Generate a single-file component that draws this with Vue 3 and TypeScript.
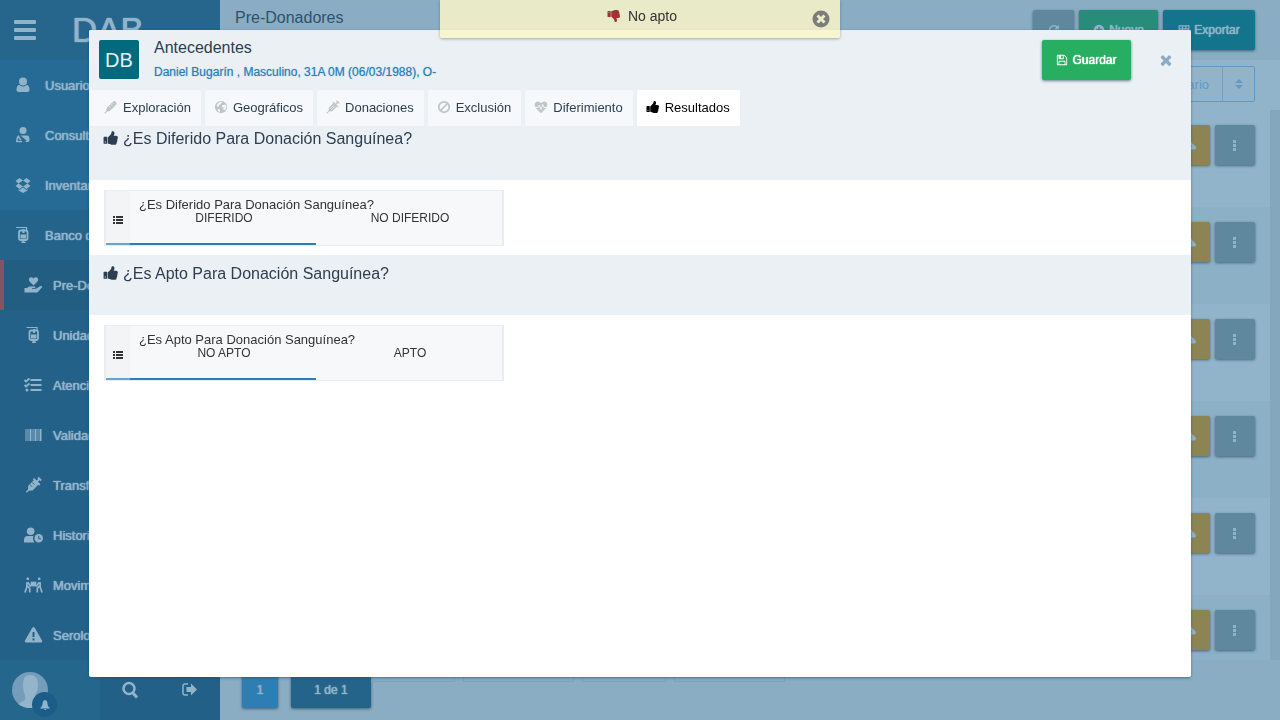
<script setup lang="ts">
import { ref, h, type FunctionalComponent } from 'vue'

const THUMB =
  'M320 1344q0-26-19-45t-45-19q-27 0-45.500 19t-18.500 45q0 27 18.500 45.500t45.500 18.500q26 0 45-18.500t19-45.500zm160-512v640q0 26-19 45t-45 19h-288q-26 0-45-19t-19-45v-640q0-26 19-45t45-19h288q26 0 45 19t19 45zm1184 0q0 86-55 149 15 44 15 76 3 76-43 137 17 56 0 117-15 57-54 94 9 112-49 181-64 76-197 78h-129q-66 0-144-15.500t-121.500-29-120.500-39.500q-123-43-158-44-26-1-45-19.500t-19-44.500v-641q0-25 18-43.500t43-20.500q24-2 76-59t101-121q68-87 101-120 18-18 31-48t17.500-48.500 13.500-60.500q7-39 12.500-61t19.500-52 34-50q19-19 45-19 46 0 82.500 10.500t60 26 40 40.500 24 45 12 50 5 45 .5 39q0 38-9.500 76t-19 60-27.500 56q-3 6-10 18t-11 22-8 24h277q78 0 135 57t57 135z'
const TIMES =
  'M1490 1322q0 40-28 68l-136 136q-28 28-68 28t-68-28l-294-294-294 294q-28 28-68 28t-68-28l-136-136q-28-28-28-68t28-68l294-294-294-294q-28-28-28-68t28-68l136-136q28-28 68-28t68 28l294 294 294-294q28-28 68-28t68 28l136 136q28 28 28 68t-28 68l-294 294 294 294q28 28 28 68z'

const icons: Record<string, { box: string; body: string }> = {
  bars: {
    box: '0 0 22 20',
    body: '<rect width="22" height="4" rx="1" fill="currentColor"/><rect y="8" width="22" height="4" rx="1" fill="currentColor"/><rect y="16" width="22" height="4" rx="1" fill="currentColor"/>',
  },
  thumbUp: { box: '0 0 1792 1792', body: `<path fill="currentColor" d="${THUMB}"/>` },
  thumbDown: { box: '0 0 1792 1792', body: `<path fill="currentColor" transform="matrix(1 0 0 -1 0 1792)" d="${THUMB}"/>` },
  times: { box: '0 0 1792 1792', body: `<path fill="currentColor" d="${TIMES}"/>` },
  closeCircle: {
    box: '0 0 18 18',
    body: '<circle cx="9" cy="9" r="8.500" fill="currentColor"/><path d="M5.500 5.500l7 7M12.500 5.500l-7 7" stroke="#ebecc8" stroke-width="3"/>',
  },
  save: {
    box: '0 0 1792 1792',
    body: '<path fill="currentColor" d="M512 1536h768v-384h-768v384zm896 0h128v-896q0-14-10-38.500t-20-34.500l-281-281q-10-10-34-20t-39-10v416q0 40-28 68t-68 28h-576q-40 0-68-28t-28-68v-416h-128v1280h128v-416q0-40 28-68t68-28h832q40 0 68 28t28 68v416zm-384-928v-320q0-13-9.500-22.500t-22.500-9.500h-192q-13 0-22.500 9.500t-9.500 22.500v320q0 13 9.500 22.500t22.500 9.500h192q13 0 22.500-9.500t9.500-22.500zm640 32v928q0 40-28 68t-68 28h-1344q-40 0-68-28t-28-68v-1344q0-40 28-68t68-28h928q40 0 88 20t76 48l280 280q28 28 48 76t20 88z"/>',
  },
  user: {
    box: '0 0 18 18',
    body: '<circle cx="9" cy="5.500" r="4" fill="currentColor"/><path fill="currentColor" d="M5.500 9Q9 12 12.500 9 15.500 9 15.500 14 15.500 16 13.500 16h-9Q2.500 16 2.500 14 2.500 9 5.500 9z"/>',
  },
  doctor: {
    box: '0 0 18 18',
    body: '<circle cx="9" cy="4.500" r="3.500" fill="currentColor"/><path d="M4 10.500Q2.800 12 2.800 15.500H8M4.500 9.500q0 3 2.500 4" fill="none" stroke="currentColor" stroke-width="1.500"/><path fill="currentColor" d="M6.500 9.500h7q2 0 2 4.500 0 2-1.500 2h-3l1.500-1.500z"/>',
  },
  dropbox: {
    box: '0 0 18 18',
    body: '<path fill="currentColor" d="M5.500 2L9 4.500 4.500 7.500 1.500 5zM12.500 2L9 4.500l4.500 3 3-2.500zM1.500 10l3-2.500L9 10.500 5.500 13zM16.500 10l-3-2.500-4.500 3 3.500 2.500zM9 11.500l3.500 2.500 1-1v1.500L9 17l-4.500-2.500V13l1 1z"/>',
  },
  bag: {
    box: '0 0 18 18',
    body: '<path d="M2 1.500h10.500v3" fill="none" stroke="currentColor" stroke-width="1.200"/><rect x="5" y="4.500" width="8.500" height="9.500" rx="1.500" fill="none" stroke="currentColor" stroke-width="1.800"/><path fill="currentColor" d="M6.500 8.500h5.500v4H6.500zM8.500 3h2v4h-2zM8.500 14h1.500v3H8.500zM7.500 15.500h4V17h-4z"/>',
  },
  handHeart: {
    box: '0 0 18 18',
    body: '<path fill="currentColor" d="M9 9.500L5 5.500Q3.500 3 5.500 1.500 7.500.5 9 2.500 10.500.5 12.500 1.500 14.500 3 13 5.500zM0 12h2.500l2-1.500h6q1 .5 0 1.500H7.500v.8h4L16 10q2 0 1.800 1L13 16.500H0z"/>',
  },
  tasks: {
    box: '0 0 18 18',
    body: '<path fill="currentColor" d="M6 3h11v2H6zM6 8h11v2H6zM6 13h11v2H6z"/><circle cx="2.500" cy="14" r="1.500" fill="currentColor"/><path d="M0 4l1.500 1.500L5 2.500M0 9l1.500 1.500L5 7.500" fill="none" stroke="currentColor" stroke-width="1.800"/>',
  },
  barcode: {
    box: '0 0 18 18',
    body: '<path fill="currentColor" d="M1 3h1v12H1zM3 3h1v12H3zM5 3h2v12H5zM8 3h1v12H8zM10 3h2v12h-2zM13 3h1v12h-1zM15 3h2v12h-2z"/>',
  },
  syringe: {
    box: '0 0 20 20',
    body: '<path d="M2 18l3-3" stroke="currentColor" stroke-width="1.500"/><path d="M4 16.500v-5.500l7-7 5 5-7 7z" fill="currentColor"/><path d="M10 3l7 7M13.500 6.500L17 3M15 1.500l3.500 3.500" stroke="currentColor" stroke-width="2"/><path d="M6 9.500l2.500 2.500M8.500 7l2.500 2.500" stroke="#236188" stroke-width="1"/>',
  },
  vial: {
    box: '0 0 20 20',
    body: '<path d="M1 19l4-4" stroke="currentColor" stroke-width="1.500"/><path d="M3.500 16.500q-1-4 1.500-6.500l8-8q2-1.500 4 .5t.5 4l-8 8q-2.500 2.500-6 2z" fill="currentColor"/><path d="M7 8.500l2 2M9.500 6l2 2M12 3.500l2 2" stroke="#f6f8fb" stroke-width="1"/>',
  },
  needle: {
    box: '0 0 20 20',
    body: '<path d="M1 19l4-4" stroke="currentColor" stroke-width="1.500"/><path d="M4 16v-5l7-7 5 5-7 7z" fill="currentColor"/><path d="M10 3l7 7M13.500 6.500L17 3M15 1l4 4" stroke="currentColor" stroke-width="1.800"/><path d="M6 12.500L11 7.500M8 14l5-5" stroke="#f6f8fb" stroke-width="1"/>',
  },
  userClock: {
    box: '0 0 20 18',
    body: '<circle cx="7" cy="5" r="4" fill="currentColor"/><path fill="currentColor" d="M0 17v-3q0-4 4-4h6q-1.500 3 1 7z"/><circle cx="15.500" cy="12.500" r="4.500" fill="currentColor"/><path d="M15.500 10v3H18" fill="none" stroke="#236188" stroke-width="1"/>',
  },
  carry: {
    box: '0 0 20 18',
    body: '<circle cx="4" cy="2.500" r="1.500" fill="currentColor"/><circle cx="16" cy="2.500" r="1.500" fill="currentColor"/><path fill="currentColor" d="M7 5.500h6v5H7z"/><path d="M3 6v5l-2 6M3.500 10l2.500 2.500V17M4 6l3 4.500M17 6v5l2 6M16.500 10L14 12.500V17M16 6l-3 4.500" fill="none" stroke="currentColor" stroke-width="1.800"/>',
  },
  warning: {
    box: '0 0 18 18',
    body: '<path fill="currentColor" d="M9 1q.8 0 1.500 1.200l7 12.300q.8 2-.8 2H1.300q-1.600 0-.8-2l7-12.300Q8.200 1 9 1z"/><path fill="#236188" d="M8 6h2v5H8zM8 12.500h2v2H8z"/>',
  },
  bell: {
    box: '0 0 12 12',
    body: '<path fill="currentColor" d="M6 1q2.500.5 2.500 4Q8.500 7.500 11 9.500H1Q3.500 7.500 3.500 5 3.500 1.500 6 1zM5 10h2.500q-1.200 2-2.500 0z"/>',
  },
  search: {
    box: '0 0 18 18',
    body: '<circle cx="8" cy="7.500" r="5.500" fill="none" stroke="currentColor" stroke-width="2.500"/><path d="M11.500 11.500l4.500 5" stroke="currentColor" stroke-width="3"/>',
  },
  logout: {
    box: '0 0 18 18',
    body: '<path d="M7 3H4Q2 3 2 5v7q0 2 2 2h3" fill="none" stroke="currentColor" stroke-width="1.500"/><path fill="currentColor" d="M5.500 6H10V2.500l6 6-6 6V11H5.500z"/>',
  },
  globe: {
    box: '0 0 16 16',
    body: '<circle cx="8" cy="8" r="7" fill="currentColor"/><path fill="#f6f8fb" d="M7 2l2 .5-1 2-2 1L5 8 3 6.500Q3.500 3.500 7 2zM9.500 6L13 5l1.500 3-2 4-2-1.500.5-2-2-.5zM4 10l3 1-.5 3Q4 12.500 4 10z"/>',
  },
  ban: {
    box: '0 0 16 16',
    body: '<circle cx="8" cy="8" r="6" fill="none" stroke="currentColor" stroke-width="2"/><path d="M4 12l8-8" stroke="currentColor" stroke-width="2"/>',
  },
  heartbeat: {
    box: '0 0 16 16',
    body: '<path fill="currentColor" d="M8 15L2 9Q-.5 5 2 2.500 5 .5 8 3.500q3-3 6-1Q16.500 5 14 9z"/><path d="M1 8.500h3.500L6 6l2 5 2-6 1.500 3.500H15" fill="none" stroke="#f6f8fb" stroke-width="1"/>',
  },
  list: {
    box: '0 0 12 10',
    body: '<path fill="currentColor" d="M1 1h2v2H1zM1 4h2v2H1zM1 7h2v2H1zM4 1h7v2H4zM4 4h7v2H4zM4 7h7v2H4z"/>',
  },
  refresh: {
    box: '0 0 16 16',
    body: '<path d="M13 5A6 6 0 1 0 14 9" fill="none" stroke="currentColor" stroke-width="2"/><path fill="currentColor" d="M14.500 1v6h-6z"/>',
  },
  plus: {
    box: '0 0 16 16',
    body: '<circle cx="8" cy="8" r="7" fill="currentColor"/><path d="M8 4v8M4 8h8" stroke="#288c7a" stroke-width="2"/>',
  },
  table: {
    box: '0 0 16 16',
    body: '<path d="M1.500 2.500h13v11h-13zM1.500 6.500h13M1.500 10h13M6 3v10.500M10.500 3v10.500" fill="none" stroke="currentColor" stroke-width="1.500"/>',
  },
  sort: { box: '0 0 10 12', body: '<path fill="currentColor" d="M5 1l4 4H1zM5 11L1 7h8z"/>' },
  cloud: {
    box: '0 0 16 16',
    body: '<path fill="currentColor" d="M4 14Q0 13.500 1 10.500q.5-1.500 2-2Q3.500 3 7.500 3q3 0 4 3.500Q14 6.500 14 9q2 .5 2 2.500 0 2.500-3 2.500z"/><path fill="#8c8453" d="M7 7h2v2h2l-3 3-3-3h2z"/>',
  },
  dots: { box: '0 0 12 12', body: '<path fill="currentColor" d="M4 1h3v3H4zM4 5h3v3H4zM4 9h3v3H4z"/>' },
}

const Icon: FunctionalComponent<{ name: string }> = (props) =>
  h('svg', { viewBox: icons[props.name].box, 'aria-hidden': 'true', fill: 'none', innerHTML: icons[props.name].body })
Icon.props = ['name']

const mainMenu = [
  { icon: 'user', label: 'Usuarios' },
  { icon: 'doctor', label: 'Consultas' },
  { icon: 'dropbox', label: 'Inventario' },
  { icon: 'bag', label: 'Banco de Sangre' },
]
const subMenu = [
  { icon: 'handHeart', label: 'Pre-Donadores' },
  { icon: 'bag', label: 'Unidades' },
  { icon: 'tasks', label: 'Atenciones' },
  { icon: 'barcode', label: 'Validaciones' },
  { icon: 'syringe', label: 'Transfusiones' },
  { icon: 'userClock', label: 'Historial' },
  { icon: 'carry', label: 'Movimientos' },
  { icon: 'warning', label: 'Serología' },
]
const tabs = [
  { icon: 'vial', label: 'Exploración' },
  { icon: 'globe', label: 'Geográficos' },
  { icon: 'needle', label: 'Donaciones' },
  { icon: 'ban', label: 'Exclusión' },
  { icon: 'heartbeat', label: 'Diferimiento' },
  { icon: 'thumbUp', label: 'Resultados' },
]
const activeTab = ref(5)
const sections = ref([
  { title: '¿Es Diferido Para Donación Sanguínea?', options: ['DIFERIDO', 'NO DIFERIDO'], chosen: 0 },
  { title: '¿Es Apto Para Donación Sanguínea?', options: ['NO APTO', 'APTO'], chosen: 0 },
])
</script>

<template>
  <div class="app">
    <aside class="sidebar">
      <div class="brand">
        <button class="burger" aria-label="Menú"><Icon name="bars" /></button>
        <span class="logo">DAB</span>
      </div>
      <nav class="menu">
        <a v-for="(m, i) in mainMenu" :key="m.label" href="#" class="item" :class="{ open: i === 3 }">
          <Icon :name="m.icon" /><span>{{ m.label }}</span>
        </a>
        <div class="sub">
          <a v-for="(m, i) in subMenu" :key="m.label" href="#" class="item" :class="{ current: i === 0 }">
            <Icon :name="m.icon" /><span>{{ m.label }}</span>
          </a>
        </div>
      </nav>
      <div class="account">
        <div class="avatar">
          <svg class="face" viewBox="0 0 36 36" aria-hidden="true">
            <circle cx="18" cy="18" r="18" fill="#749dbb" />
            <path fill="#93b4ca" d="M18 3q8 0 8 9 0 8-3 11v5l7 4Q18 40 6 32l7-4v-5q-2-3-2-11 0-9 7-9z" />
          </svg>
          <span class="bell"><Icon name="bell" /></span>
        </div>
        <div class="tools">
          <button aria-label="Buscar"><Icon name="search" /></button>
          <button aria-label="Salir"><Icon name="logout" /></button>
        </div>
      </div>
    </aside>

    <main class="page">
      <header class="top">
        <h1>Pre-Donadores</h1>
        <button class="btn grey refresh" aria-label="Recargar"><Icon name="refresh" /></button>
        <button class="btn teal"><Icon name="plus" />Nuevo</button>
        <button class="btn cyan"><Icon name="table" />Exportar</button>
      </header>
      <div class="filter">
        <button class="sorter"><span>Usuario</span><i><Icon name="sort" /></i></button>
      </div>
      <div class="rows">
        <div v-for="n in 6" :key="n" class="row">
          <button class="btn square gold" aria-label="Descargar"><Icon name="cloud" /></button>
          <button class="btn square grey" aria-label="Más"><Icon name="dots" /></button>
        </div>
      </div>
      <footer class="pager">
        <button class="btn blue">1</button>
        <button class="btn navy">1 de 1</button>
        <span class="chips"><i></i><i class="wide"></i><i></i><i class="wide"></i></span>
      </footer>
    </main>

    <div class="overlay">
      <section class="modal" role="dialog" aria-label="Antecedentes">
        <header class="head">
          <div class="initials">DB</div>
          <div class="who">
            <h2>Antecedentes</h2>
            <p>Daniel Bugarín , Masculino, 31A 0M (06/03/1988), O-</p>
          </div>
          <button class="btn save"><Icon name="save" />Guardar</button>
          <button class="close" aria-label="Cerrar"><Icon name="times" /></button>
        </header>
        <div class="tabs" role="tablist">
          <button
            v-for="(t, i) in tabs"
            :key="t.label"
            role="tab"
            :aria-selected="i === activeTab"
            :class="{ active: i === activeTab }"
            @click="activeTab = i"
          >
            <Icon :name="t.icon" />{{ t.label }}
          </button>
        </div>
        <section v-for="s in sections" :key="s.title" class="block">
          <h3><Icon name="thumbUp" />{{ s.title }}</h3>
          <div class="content">
            <div class="card">
              <div class="handle"><Icon name="list" /></div>
              <div class="field">
                <p>{{ s.title }}</p>
                <div class="options">
                  <button
                    v-for="(o, i) in s.options"
                    :key="o"
                    :class="{ on: s.chosen === i }"
                    @click="s.chosen = i"
                  >{{ o }}</button>
                </div>
              </div>
            </div>
          </div>
        </section>
      </section>
    </div>

    <div class="toast" role="status">
      <Icon name="thumbDown" /><span>No apto</span>
      <button aria-label="Cerrar aviso"><Icon name="closeCircle" /></button>
    </div>
  </div>
</template>

<style>
body {
  margin: 0;
}
</style>

<style scoped>
* {
  box-sizing: border-box;
}
.app {
  display: flex;
  height: 100vh;
  overflow: hidden;
  font-family: "Liberation Sans", Arial, sans-serif;
  font-size: 13px;
  color: #333;
}
svg {
  display: block;
  flex: none;
}
button {
  font: inherit;
  color: inherit;
  border: 0;
  padding: 0;
  background: none;
  cursor: pointer;
}
h1,
h2,
h3,
p {
  margin: 0;
  font-weight: 400;
}

/* sidebar */
.sidebar {
  width: 220px;
  flex: none;
  display: flex;
  flex-direction: column;
  background: #256b95;
  color: #91b4ca;
}
.brand {
  height: 60px;
  flex: none;
  display: flex;
  align-items: center;
  padding-left: 14px;
  background: #26668c;
}
.burger svg {
  width: 22px;
  height: 20px;
}
.logo {
  margin-left: 36px;
  font-size: 35px;
  line-height: 60px;
  text-shadow: 0 0 1px currentColor, 0 0 1px currentColor;
}
.menu {
  flex: 1;
  overflow: hidden;
}
.item {
  height: 50px;
  display: flex;
  align-items: center;
  gap: 13px;
  padding-left: 14px;
  color: inherit;
  font-size: 13px;
  text-decoration: none;
  white-space: nowrap;
  text-shadow: 0 0 1px currentColor, 0 0 1px currentColor;
}
.item svg {
  width: 18px;
  height: 18px;
}
.item.open {
  background: #24648b;
}
.sub {
  background: #236188;
}
.sub .item {
  gap: 10px;
  padding-left: 20px;
  border-left: 4px solid transparent;
}
.sub .item svg {
  width: 19px;
}
.sub .item.current {
  background: #225d82;
  border-left-color: #835464;
}
.account {
  height: 60px;
  flex: none;
  display: flex;
  background: #25668d;
}
.avatar {
  position: relative;
  width: 100px;
}
.face {
  width: 36px;
  height: 36px;
  margin: 12px;
}
.bell {
  position: absolute;
  left: 32px;
  top: 32px;
  width: 25px;
  height: 25px;
  border-radius: 50%;
  background: #1b5d88;
  display: grid;
  place-items: center;
}
.bell svg {
  width: 12px;
  height: 12px;
}
.tools {
  flex: 1;
  display: flex;
  background: #236087;
}
.tools button {
  flex: 1;
  display: grid;
  place-items: center;
}
.tools svg {
  width: 18px;
  height: 18px;
}

/* page */
.page {
  flex: 1;
  min-width: 0;
  display: flex;
  flex-direction: column;
  background: #8aadc3;
}
.top {
  height: 60px;
  flex: none;
  display: flex;
  align-items: flex-start;
  gap: 5px;
  padding: 10px 25px 0 15px;
}
h1 {
  flex: 1;
  font-size: 16px;
  line-height: 16px;
  color: #2a5370;
}
.btn {
  height: 40px;
  display: flex;
  align-items: center;
  justify-content: center;
  gap: 4px;
  padding: 0 15px;
  border-radius: 2px;
  font-size: 12px;
  color: #8fb3c9;
  text-shadow: 0 0 1px currentColor, 0 0 1px currentColor;
  box-shadow: 0 1px 3px rgba(20, 50, 70, 0.6);
}
.btn svg {
  width: 12px;
  height: 12px;
}
.refresh {
  width: 41px;
}
.grey {
  background: #5f889f;
}
.teal {
  width: 79px;
  background: #288c7a;
}
.cyan {
  width: 92px;
  background: #13758b;
}
.gold {
  background: #8c8453;
}
.blue {
  width: 36px;
  background: #2d7fb3;
}
.navy {
  width: 80px;
  background: #24648b;
}
.filter {
  height: 50px;
  flex: none;
  display: flex;
  justify-content: flex-end;
  padding: 6px 25px 0 0;
  background: #92b4ca;
}
.sorter {
  height: 36px;
  display: flex;
  align-items: center;
  border: 1px solid #5f9ac4;
  border-radius: 2px;
  color: #5f9ac4;
}
.sorter span {
  padding: 0 13px;
}
.sorter i {
  width: 32px;
  height: 34px;
  display: grid;
  place-items: center;
  border-left: 1px solid #709fbe;
}
.sorter svg {
  width: 10px;
  height: 12px;
}
.rows {
  flex: 1;
  overflow: hidden;
  border-right: 10px solid #84a7bc;
}
.row {
  height: 97px;
  display: flex;
  justify-content: flex-end;
  gap: 5px;
  padding: 15px 15px 0 0;
  background: #92b4ca;
}
.row:nth-child(even) {
  background: #8cb0c5;
}
.square {
  width: 40px;
  padding: 0;
}
.pager {
  height: 60px;
  flex: none;
  display: flex;
  gap: 13px;
  padding: 12px 22px;
}
.pager .btn {
  height: 36px;
}
.chips {
  display: flex;
  gap: 8px;
  margin-left: -13px;
}
.chips i {
  width: 84px;
  height: 10px;
  border: 1px solid #7aa3bd;
}
.chips .wide {
  width: 111px;
}

/* dialog */
.overlay {
  position: fixed;
  inset: 0;
  padding: 30px 89px 43px;
}
.modal {
  height: 100%;
  overflow: hidden;
  background: #fff;
  border-radius: 2px;
  box-shadow: 0 1px 3px rgba(20, 80, 120, 0.6);
}
.head {
  height: 60px;
  display: flex;
  padding: 10px;
  background: #ebf0f4;
}
.initials {
  width: 40px;
  height: 39px;
  border-radius: 2px;
  background: #026a7d;
  color: #e4f0f2;
  font-size: 20px;
  line-height: 40px;
  text-align: center;
}
.who {
  flex: 1;
  padding-left: 15px;
}
h2 {
  font-size: 16px;
  line-height: 16px;
  color: #2c3e50;
}
.who p {
  padding-top: 9px;
  font-size: 12px;
  line-height: 14px;
  color: #2980b9;
  text-shadow: 0 0 1px rgba(41, 128, 185, 0.6);
}
.save {
  width: 89px;
  background: #27ae60;
  color: #fff;
}
.close {
  width: 50px;
  margin-left: 10px;
  margin-right: -10px;
  height: 40px;
  display: grid;
  place-items: center;
  color: #8aadc5;
}
.close svg {
  width: 16px;
  height: 16px;
}
.tabs {
  height: 36px;
  display: flex;
  gap: 4px;
  background: #ebf0f4;
}
.tabs button {
  display: flex;
  align-items: center;
  gap: 5px;
  padding: 0 10px 2px 15px;
  border-radius: 2px 2px 0 0;
  background: #f6f8fb;
  color: #2c3e50;
}
.tabs button + button {
  padding-left: 9px;
}
.tabs svg {
  width: 14px;
  height: 14px;
  color: #bfc5c8;
}
.tabs .active,
.tabs .active svg {
  color: #000;
}
.tabs .active {
  background: #fff;
}
h3 {
  height: 60px;
  display: flex;
  align-items: flex-start;
  gap: 4px;
  padding: 9px 14px 0;
  background: #ebf0f4;
  font-size: 16px;
  line-height: 20px;
  color: #2c3e50;
}
.tabs + .block h3 {
  height: 54px;
  padding-top: 3px;
}
h3 svg {
  width: 16px;
  height: 18px;
}
.content {
  padding: 10px 15px 9px;
}
.card {
  width: 400px;
  max-width: 100%;
  height: 56px;
  display: flex;
  border: 1px solid #e9edef;
  border-width: 1px 2px;
  background: #f7f8fa;
}
.handle {
  width: 24px;
  display: grid;
  place-items: center;
  padding-top: 5px;
  border-bottom: 2px solid #66a3cd;
  background: #f3f4f6;
}
.handle svg {
  width: 12px;
  height: 10px;
}
.field {
  flex: 1;
  display: flex;
  flex-direction: column;
}
.field p {
  padding: 7px 9px 0;
  line-height: 13px;
}
.options {
  flex: 1;
  display: flex;
}
.options button {
  flex: 1;
  display: flex;
  justify-content: center;
  padding-left: 2px;
  font-size: 12px;
  line-height: 14px;
  border-bottom: 2px solid transparent;
}
.options .on {
  border-bottom-color: #2980b9;
}

/* notice */
.toast {
  position: fixed;
  top: 0;
  left: calc(50% - 200px);
  width: 400px;
  height: 38px;
  display: flex;
  justify-content: center;
  gap: 7px;
  padding: 8px 0 0 4px;
  border-radius: 0 0 2px 2px;
  background: rgba(252, 246, 200, 0.84);
  box-shadow: 0 1px 3px rgba(60, 60, 30, 0.4);
  font-size: 14px;
  line-height: 17px;
}
.toast > svg {
  width: 14px;
  height: 16px;
  color: #a03232;
}
.toast button {
  position: absolute;
  right: 10px;
  top: 10px;
  color: #7c7c78;
}
.toast button svg {
  width: 18px;
  height: 18px;
}
</style>
